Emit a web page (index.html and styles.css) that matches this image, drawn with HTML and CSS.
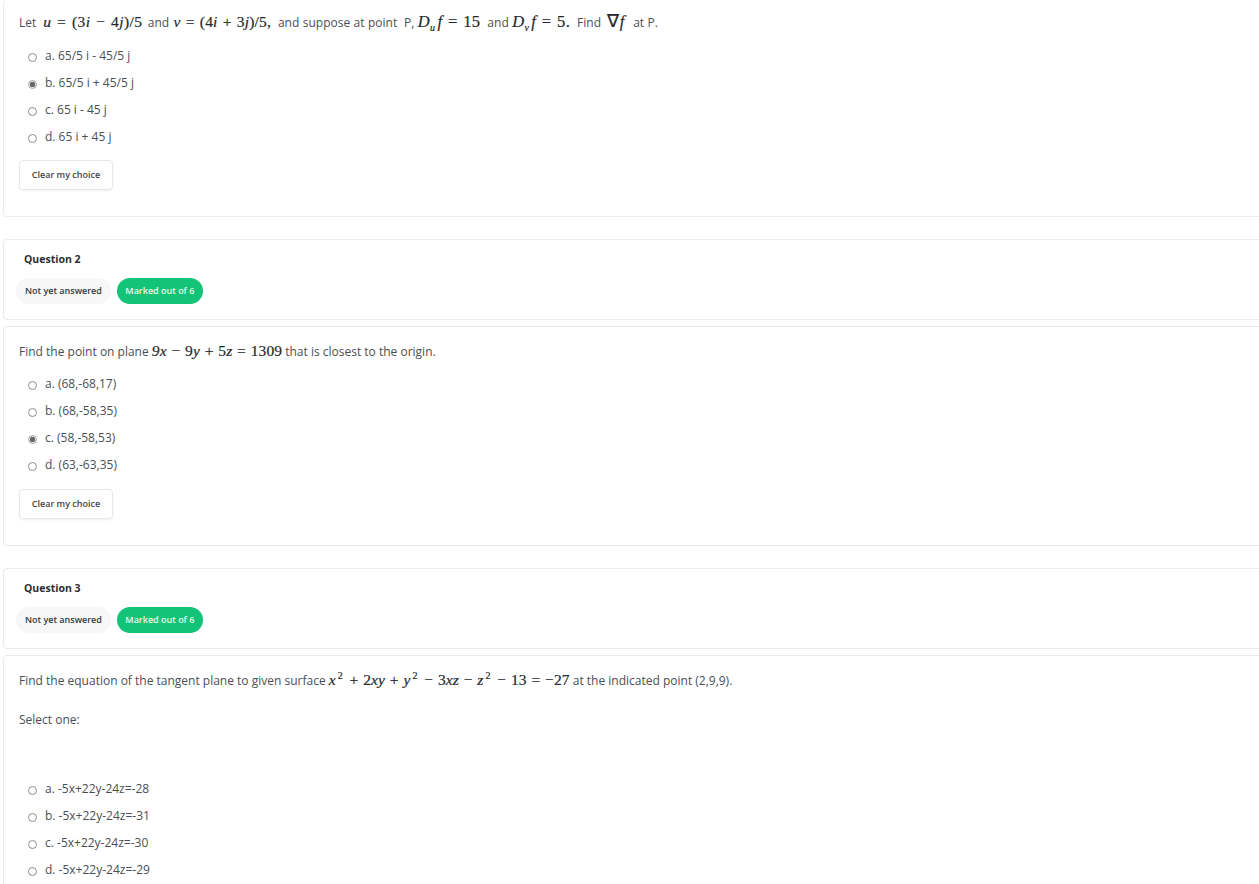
FILE: index.html
```html
<!DOCTYPE html>
<html>
    <head>
        <title>Quiz attempt</title>
        <link rel="stylesheet" href="styles.css">
    </head>
    <body>
        <div class="card content first">
            <p class="prompt">Let &nbsp;<span class="math gap"><i>u</i> = (3<i>i</i> − 4<i>j</i>)/5</span> and <span class="math gap tight"><i>v</i> = (4<i>i</i> + 3<i>j</i>)/5,</span> &nbsp;and suppose at point &nbsp;P, <span class="math big"><i>D<sub>u</sub>f</i> = 15</span> &nbsp;and <span class="math big"><i>D<sub>v</sub>f</i> = 5.</span> &nbsp;Find <span class="math big grad"><span class="nabla">∇</span><i>f</i></span> &nbsp;at P.</p>
            <div class="answers">
                <label class="answer"><span class="radio"></span>a. 65/5 i - 45/5 j</label>
                <label class="answer"><span class="radio checked"></span>b. 65/5 i + 45/5 j</label>
                <label class="answer"><span class="radio"></span>c. 65 i - 45 j</label>
                <label class="answer"><span class="radio"></span>d. 65 i + 45 j</label>
            </div>
            <div class="clear">Clear my choice</div>
        </div>

        <div class="card info">
            <h3 class="qno">Question 2</h3>
            <div class="pills">
                <span class="pill state">Not yet answered</span>
                <span class="pill mark">Marked out of 6</span>
            </div>
        </div>
        <div class="card content">
            <p class="prompt">Find the point on plane <span class="math"><i>9x</i> − 9<i>y</i> + 5<i>z</i> = 1309</span> that is closest to the origin.</p>
            <div class="answers">
                <label class="answer"><span class="radio"></span>a. (68,-68,17)</label>
                <label class="answer"><span class="radio"></span>b. (68,-58,35)</label>
                <label class="answer"><span class="radio checked"></span>c. (58,-58,53)</label>
                <label class="answer"><span class="radio"></span>d. (63,-63,35)</label>
            </div>
            <div class="clear">Clear my choice</div>
        </div>

        <div class="card info">
            <h3 class="qno">Question 3</h3>
            <div class="pills">
                <span class="pill state">Not yet answered</span>
                <span class="pill mark">Marked out of 6</span>
            </div>
        </div>
        <div class="card content last">
            <p class="prompt">Find the equation of the tangent plane to given surface <span class="math"><i>x</i><sup>2</sup> + 2<i>xy</i> + <i>y</i><sup>2</sup> − 3<i>xz</i> − <i>z</i><sup>2</sup> − 13 = −27</span> at the indicated point (2,9,9).</p>
            <p class="select">Select one:</p>
            <div class="answers">
                <label class="answer"><span class="radio"></span>a. -5x+22y-24z=-28</label>
                <label class="answer"><span class="radio"></span>b. -5x+22y-24z=-31</label>
                <label class="answer"><span class="radio"></span>c. -5x+22y-24z=-30</label>
                <label class="answer"><span class="radio"></span>d. -5x+22y-24z=-29</label>
            </div>
        </div>
    </body>
</html>
```
FILE: styles.css
```css
html, body {
    margin: 0;
    height: 884px;
    overflow: hidden;
    background: #fff;
}
body {
    padding-left: 3px;
    font-family: "Open Sans", sans-serif;
    font-size: 12px;
    color: #4a4f55;
}
.card {
    margin-right: -12px;
    background: #fff;
    border: 1px solid #e8eaec;
    border-radius: 4px;
}
.content {
    padding: 16px 15px 26px;
    margin-bottom: 22px;
}
.first {
    height: 217px;
    box-sizing: border-box;
    padding-top: 14px;
    border-top: none;
}
.first .prompt {
    word-spacing: 0.3px;
}
.first .answers {
    margin-top: 10px;
}
.first .clear {
    margin-top: 10px;
}
.last {
    height: 229px;
    box-sizing: border-box;
    margin-bottom: 0;
    padding-bottom: 0;
    border-bottom: none;
    border-radius: 4px 4px 0 0;
}
.info {
    height: 81px;
    box-sizing: border-box;
    margin-bottom: 6px;
    padding: 11px 12px 0;
}
.prompt {
    height: 18px;
    margin: 0;
    line-height: 18px;
    white-space: nowrap;
}
.select {
    margin: 21px 0 0;
    line-height: 18px;
}
.select + .answers {
    margin-top: 46px;
}
.math {
    font-family: "Liberation Serif", serif;
    font-size: 15.5px;
    line-height: 0;
    letter-spacing: 0.1px;
    word-spacing: 0.8px;
    color: #25282c;
    -webkit-text-stroke: 0.2px #25282c;
}
.math.gap {
    margin: 0 2px 0 0;
    letter-spacing: 0.4px;
    word-spacing: 1.5px;
}
.math.gap.tight {
    margin: 0 0 0 1px;
    letter-spacing: 0.2px;
    word-spacing: 1px;
}
.math.big {
    font-size: 16.5px;
    letter-spacing: 0.4px;
    word-spacing: 1px;
}
.math.grad {
    margin: 0 1.5px 0 3px;
}
.math sub, .math sup {
    font-size: 10px;
    line-height: 0;
}
.math sup {
    margin: 0 2px;
}
.math sub {
    margin-right: 2px;
}
.nabla {
    font-size: 18px;
}
.answers {
    margin-top: 9px;
}
.answer {
    display: flex;
    align-items: center;
    height: 27px;
    padding-left: 9px;
    white-space: nowrap;
}
.radio {
    box-sizing: border-box;
    width: 9px;
    height: 9px;
    margin: 4px 8px 0 0;
    border: 1px solid #8a8d90;
    border-radius: 50%;
    background: #fff;
}
.radio.checked {
    border-color: #a5a5a5;
    background: radial-gradient(circle, #666 0 2.4px, #e8e8e8 3px);
}
.clear {
    width: 94px;
    height: 30px;
    box-sizing: border-box;
    margin-top: 11px;
    border: 1px solid #e6e7ee;
    border-radius: 4px;
    box-shadow: 0 1px 2px rgba(60, 60, 110, 0.08);
    font-size: 9px;
    font-weight: 600;
    line-height: 28px;
    text-align: center;
    color: #3f4448;
}
.qno {
    margin: 0 0 0 8px;
    font-size: 10.5px;
    font-weight: 700;
    line-height: 16px;
    color: #2b2f36;
}
.pills {
    display: flex;
    gap: 6px;
    margin-top: 11px;
}
.pill {
    height: 26px;
    padding: 0 9px;
    border-radius: 13px;
    font-size: 9px;
    font-weight: 600;
    line-height: 26px;
}
.state {
    background: #f7f7f7;
    color: #343a48;
}
.mark {
    box-sizing: border-box;
    width: 86px;
    padding: 0;
    text-align: center;
    background: #13c377;
    color: #e6fbf1;
}
```
